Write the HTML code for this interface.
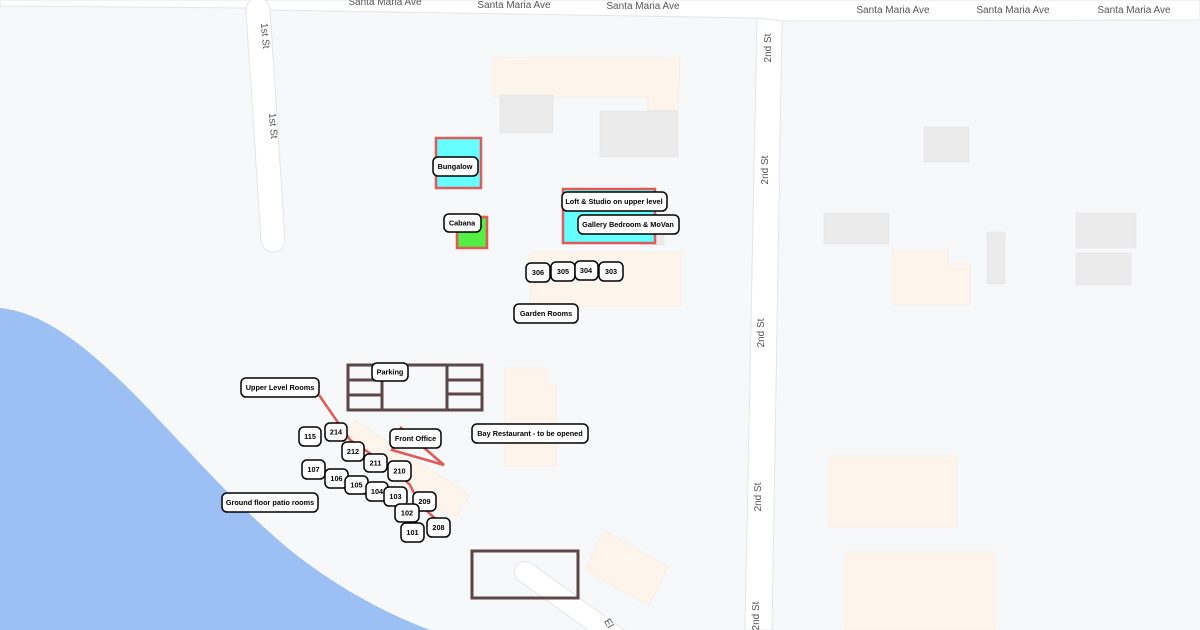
<!DOCTYPE html>
<html><head><meta charset="utf-8"><style>
html,body{margin:0;padding:0;width:1200px;height:630px;overflow:hidden;background:#f7f8fa}
svg{display:block}
.l rect{fill:#fff;stroke:#000;stroke-width:1.5}
.l text{font-family:"Liberation Sans",Arial,sans-serif;font-weight:bold;font-size:7.3px;fill:#000;text-anchor:middle;dominant-baseline:central}
.rd{font-family:"Liberation Sans",Arial,sans-serif;font-size:10px;fill:#555}
</style></head><body>
<svg width="1200" height="630" viewBox="0 0 1200 630">
<rect width="1200" height="630" fill="#f7f8fa"/>
<polygon points="0,0 1200,0 1200,20 782,21 757,18 270,10 245,8 0,6" fill="#fff" stroke="#e3e5e8"/>
<polygon points="757,18 782,21 772,630 745,630" fill="#fff" stroke="#e3e5e8"/>
<line x1="258" y1="10" x2="273" y2="240" stroke="#e3e5e8" stroke-width="25" stroke-linecap="round"/>
<line x1="258" y1="10" x2="273" y2="240" stroke="#fff" stroke-width="23" stroke-linecap="round"/>
<line x1="525" y1="572" x2="620" y2="640" stroke="#e3e5e8" stroke-width="22" stroke-linecap="round"/>
<line x1="525" y1="572" x2="620" y2="640" stroke="#fff" stroke-width="20" stroke-linecap="round"/>
<path d="M0,308 C40,312 80,340 130,390 C180,440 230,500 290,550 C340,590 390,615 430,630 L0,630 Z" fill="#9cbff4"/>
<g class="rd" text-anchor="middle">
<text x="385" y="5">Santa Maria Ave</text><text x="514" y="8">Santa Maria Ave</text><text x="643" y="9">Santa Maria Ave</text>
<text x="893" y="13">Santa Maria Ave</text><text x="1013" y="13">Santa Maria Ave</text><text x="1134" y="13">Santa Maria Ave</text>
<text transform="translate(262,36) rotate(85)">1st St</text>
<text transform="translate(270,126) rotate(85)">1st St</text>
<text transform="translate(771,48) rotate(-90)">2nd St</text>
<text transform="translate(768,170) rotate(-90)">2nd St</text>
<text transform="translate(764,333) rotate(-90)">2nd St</text>
<text transform="translate(761,497) rotate(-90)">2nd St</text>
<text transform="translate(759,616) rotate(-90)">2nd St</text>
<text transform="translate(606,625) rotate(60)">El</text>
</g>
<g fill="#fdf4eb" stroke="#f3e8dc" stroke-width="0.5">
<polygon points="493,57 680,58 678,110 648,110 648,97 493,97"/>
<rect x="530" y="252" width="151" height="54"/>
<polygon points="505,368 547,368 547,385 556,385 556,466 505,466"/>
<polygon points="893,250 948,250 948,264 970,264 970,305 893,305"/>
<rect x="829" y="456" width="128" height="71"/>
<rect x="845" y="552" width="150" height="78"/>
<polygon points="604,530 668,567 649,606 585,570"/>
<polygon points="355,420 470,495 455,520 340,445"/>
</g>
<g fill="#ebebeb" stroke="#e2e2e2" stroke-width="0.5">
<rect x="500" y="95" width="53" height="38"/><rect x="600" y="111" width="78" height="46"/>
<rect x="924" y="127" width="45" height="35"/><rect x="824" y="213" width="65" height="31"/>
<rect x="987" y="232" width="18" height="52"/><rect x="1076" y="213" width="60" height="35"/>
<rect x="1076" y="253" width="55" height="32"/><rect x="640" y="225" width="24" height="20"/>
</g>
<rect x="436" y="138" width="45" height="50" fill="#66ffff" stroke="#e05a5a" stroke-width="2.5"/>
<rect x="457" y="217" width="30" height="31" fill="#55ee44" stroke="#e05a5a" stroke-width="2.5"/>
<rect x="563" y="189" width="92" height="54" fill="#66ffff" stroke="#e05a5a" stroke-width="2.5"/>
<g fill="none" stroke="#5d4646" stroke-width="3">
<rect x="348" y="365" width="134" height="45"/>
<line x1="447" y1="365" x2="447" y2="410"/>
<line x1="348" y1="380" x2="382" y2="380"/><line x1="348" y1="395" x2="382" y2="395"/>
<line x1="382" y1="365" x2="382" y2="410"/>
<line x1="447" y1="380" x2="483" y2="380"/><line x1="447" y1="394" x2="483" y2="394"/>
<rect x="472" y="551" width="106" height="47"/>
</g>
<g fill="none" stroke="#e05a5a" stroke-width="2.5">
<polyline points="319,395 350,440 395,470 410,485 420,505 437,520"/>
<polygon points="401,428 444,465 392,450"/>
</g>
<g class="l">
<rect x="433" y="157" width="45" height="19" rx="5"/><text x="455" y="166.5">Bungalow</text>
<rect x="444" y="214" width="37" height="18" rx="5"/><text x="462" y="223">Cabana</text>
<rect x="562" y="192" width="105" height="19" rx="5"/><text x="614" y="201.5">Loft &amp; Studio on upper level</text>
<rect x="578" y="215" width="101" height="19" rx="5"/><text x="628" y="224.5">Gallery Bedroom &amp; MoVan</text>
<rect x="526" y="263" width="24" height="19" rx="5"/><text x="538" y="272.5">306</text>
<rect x="551" y="262" width="24" height="19" rx="5"/><text x="563" y="271.5">305</text>
<rect x="575" y="261" width="23" height="19" rx="5"/><text x="586" y="270.5">304</text>
<rect x="599" y="262" width="24" height="19" rx="5"/><text x="611" y="271.5">303</text>
<rect x="514" y="304" width="64" height="19" rx="5"/><text x="546" y="313.5">Garden Rooms</text>
<rect x="372" y="363" width="36" height="18" rx="5"/><text x="390" y="372">Parking</text>
<rect x="241" y="378" width="78" height="19" rx="5"/><text x="280" y="387.5">Upper Level Rooms</text>
<rect x="390" y="429" width="51" height="19" rx="5"/><text x="415.5" y="438.5">Front Office</text>
<rect x="472" y="424" width="116" height="19" rx="5"/><text x="530" y="433.5">Bay Restaurant - to be opened</text>
<rect x="299" y="427" width="22" height="19" rx="5"/><text x="310" y="436.5">115</text>
<rect x="325" y="423" width="22" height="18" rx="5"/><text x="336" y="432">214</text>
<rect x="342" y="442" width="22" height="19" rx="5"/><text x="353" y="451.5">212</text>
<rect x="364" y="454" width="23" height="18" rx="5"/><text x="375.5" y="463">211</text>
<rect x="388" y="461" width="23" height="20" rx="5"/><text x="399.5" y="471">210</text>
<rect x="302" y="460" width="23" height="19" rx="5"/><text x="313.5" y="469.5">107</text>
<rect x="325" y="469" width="23" height="19" rx="5"/><text x="336.5" y="478.5">106</text>
<rect x="345" y="476" width="23" height="18" rx="5"/><text x="356.5" y="485">105</text>
<rect x="366" y="482" width="22" height="19" rx="5"/><text x="377" y="491.5">104</text>
<rect x="384" y="487" width="23" height="19" rx="5"/><text x="395.5" y="496.5">103</text>
<rect x="413" y="492" width="23" height="19" rx="5"/><text x="424.5" y="501.5">209</text>
<rect x="395" y="504" width="24" height="18" rx="5"/><text x="407" y="513">102</text>
<rect x="427" y="518" width="23" height="19" rx="5"/><text x="438.5" y="527.5">208</text>
<rect x="401" y="523" width="23" height="19" rx="5"/><text x="412.5" y="532.5">101</text>
<rect x="222" y="493" width="96" height="19" rx="5"/><text x="270" y="502.5">Ground floor patio rooms</text>
</g>
</svg>
</body></html>
